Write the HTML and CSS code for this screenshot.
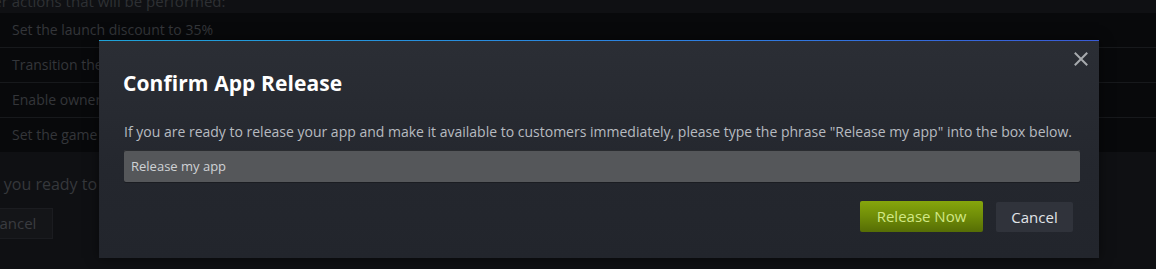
FILE: index.html
```html
<!DOCTYPE html>
<html>
<head>
<meta charset="utf-8">
<link rel="stylesheet" href="styles.css">
</head>
<body>
<div class="page">
  <div class="intro">Other actions that will be performed:</div>
  <div class="rows">
    <div class="row">Set the launch discount to 35%</div>
    <div class="row">Transition the app to released</div>
    <div class="row">Enable ownership for all users</div>
    <div class="row">Set the game visible in the store</div>
  </div>
  <div class="ask">Are you ready to release your app?</div>
  <div class="bg-actions"><span class="bg-btn">Cancel</span></div>
</div>

<div class="modal">
  <button class="close" aria-label="Close">
    <svg width="14" height="14" viewBox="0 0 14 14"><path d="M1.5 1.5 L12.5 12.5 M12.5 1.5 L1.5 12.5" stroke="#a7aaae" stroke-width="2" stroke-linecap="square" fill="none"/></svg>
  </button>
  <h1 class="title">Confirm App Release</h1>
  <p class="desc">If you are ready to release your app and make it available to customers immediately, please type the phrase "Release my app" into the box below.</p>
  <div class="field">Release my app</div>
  <div class="actions">
    <span class="btn primary">Release Now</span>
    <span class="btn secondary">Cancel</span>
  </div>
</div>
</body>
</html>
```

FILE: styles.css
```css
html, body {
  margin: 0;
  padding: 0;
  width: 1156px;
  height: 269px;
  overflow: hidden;
  background: #0f1013;
  font-family: "Open Sans", "Noto Sans", sans-serif;
}

.page {
  position: relative;
  height: 269px;
  overflow: hidden;
}

.intro {
  margin-left: -33px;
  height: 13px;
  line-height: 13px;
  margin-top: -5px;
  font-size: 15px;
  color: #2e3034;
  margin-bottom: 5px;
  white-space: nowrap;
}

.rows {
  background: #08090b;
}

.row {
  height: 34px;
  line-height: 34px;
  padding-left: 12px;
  font-size: 14px;
  color: #34363a;
  border-bottom: 1px solid #17191c;
}

.row:last-child {
  border-bottom: none;
}

.ask {
  margin-top: 20px;
  margin-left: -26px;
  font-size: 16px;
  color: #36383c;
  line-height: 24px;
  white-space: nowrap;
}

.bg-actions {
  margin-top: 12px;
}

.bg-btn {
  display: inline-block;
  margin-left: -27px;
  padding: 0 16px;
  height: 29px;
  line-height: 29px;
  font-size: 15px;
  color: #3a3c40;
  background: #141518;
  border: 1px solid #1b1c20;
}

.modal {
  position: absolute;
  left: 99px;
  top: 40px;
  width: 1000px;
  height: 218px;
  box-sizing: border-box;
  padding: 0 19px 0 24px;
  background: linear-gradient(180deg, #2b2e35 0%, #24272e 60%, #22252c 100%);
  border-top: 1px solid transparent;
  border-image: linear-gradient(90deg, #1fa3d8 0%, #2e7fe0 60%, #3a5bd6 100%) 1 0 0 0;
  box-shadow: 0 0 12px rgba(0,0,0,0.5);
}

.close {
  position: absolute;
  right: 9px;
  top: 9px;
  width: 18px;
  height: 18px;
  padding: 2px;
  border: none;
  background: none;
}

.title {
  margin: 29px 0 0 0;
  font-size: 21px;
  font-weight: 700;
  color: #ffffff;
  line-height: 27px;
  letter-spacing: 0.1px;
}

.desc {
  margin: 26px 0 0 1px;
  font-size: 14px;
  line-height: 18px;
  color: #b7bbc0;
}

.field {
  margin: 9px 0 0 1px;
  height: 32px;
  box-sizing: border-box;
  padding: 0 7px;
  line-height: 32px;
  font-size: 13px;
  color: #cfd2d5;
  background: #55575a;
  border-radius: 2px;
  box-shadow: inset 0 1px 0 #2a2c30, 0 1px 0 #1b1d22;
}

.actions {
  display: flex;
  justify-content: flex-end;
  gap: 13px;
  margin-top: 19px;
  padding-right: 7px;
}

.btn {
  display: inline-block;
  height: 31px;
  line-height: 31px;
  font-size: 15px;
  border-radius: 2px;
  text-align: center;
}

.primary {
  width: 123px;
  color: #d2e885;
  background: linear-gradient(180deg, #86a60c 0%, #6f8c08 50%, #566d05 100%);
}

.secondary {
  width: 77px;
  color: #e1e4e8;
  background: #30333b;
  margin-top: 1px;
  height: 30px;
  line-height: 30px;
}
```
